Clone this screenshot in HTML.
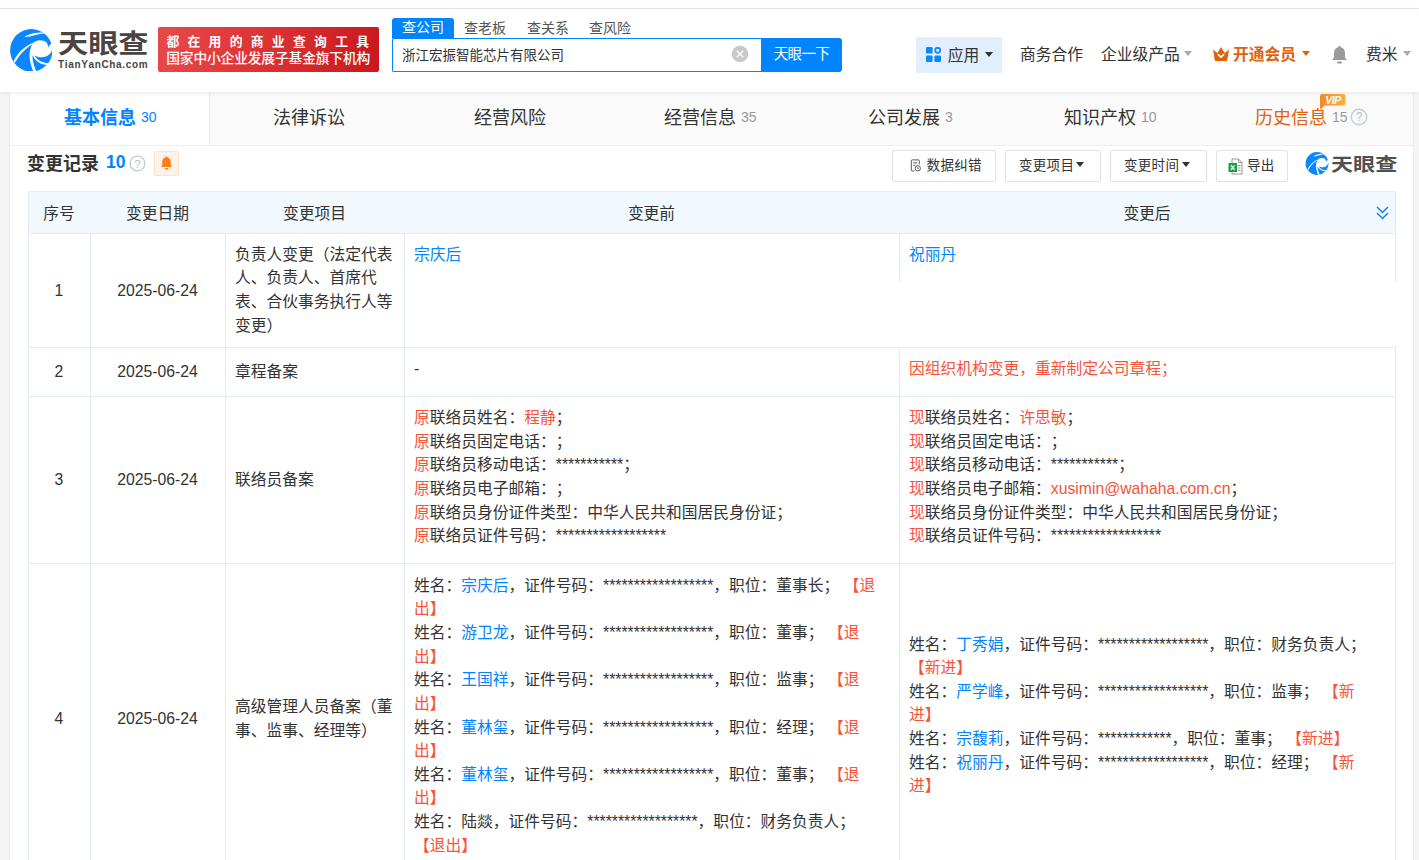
<!DOCTYPE html>
<html lang="zh-CN">
<head>
<meta charset="utf-8">
<title>天眼查 - 变更记录</title>
<style>
*{box-sizing:border-box;margin:0;padding:0}
html,body{width:1419px;height:860px;overflow:hidden}
body{text-spacing-trim:space-all;font-kerning:none;background:#f5f5f5;font-family:"Liberation Sans","Noto Sans CJK SC",sans-serif;color:#333;font-size:15.75px;line-height:23.625px;position:relative}
.abs{position:absolute;white-space:nowrap}
a{color:#0084ff;text-decoration:none}
.red{color:#f7533a}
.blue{color:#0084ff}

/* top strip + header */
#topstrip{position:absolute;left:0;top:0;width:1419px;height:9px;background:#fff;border-bottom:1px solid #e8e8e8}
#header{position:absolute;left:0;top:9px;width:1419px;height:83px;background:#fff;box-shadow:0 1px 4px rgba(0,0,0,.09);z-index:5}

/* main container */
#main{position:absolute;left:9px;top:92px;width:1405px;height:768px;background:#fff;border-left:1px solid #ededed;border-right:1px solid #ededed}
#tabs{position:absolute;left:0;top:0;width:1403px;height:54px;background:#fafafa;border-bottom:1px solid #eee}
#tabs .on{position:absolute;left:0;top:0;width:200px;height:53px;background:#fff;border-right:1px solid #eee}
.tab{position:absolute;top:13px;height:26px;line-height:26px;font-size:18px;white-space:nowrap;color:#333}
.tab small{font-size:14px;color:#999;margin-left:5px;font-weight:400;position:relative;top:-2.600px}

/* table */
#thead{position:absolute;left:28px;top:191px;width:1368px;height:43px;background:#f1f8fe;border:1px solid #e0ecf8}
.th{position:absolute;top:201.500px;height:24px;text-align:center;white-space:nowrap}
.vl{position:absolute;width:1px;background:#e3ecf6}
.hl{position:absolute;height:1px;background:#e3ecf6}
.c{position:absolute;white-space:nowrap;margin-top:0.800px}
.c.n{margin-top:0}
.btn{position:absolute;top:150px;height:32px;border:1px solid #e2e2e2;border-radius:2px;background:#fff;font-size:13.5px;line-height:30px;white-space:nowrap;color:#333}

.stab{top:9px;font-size:14px;line-height:20px;color:#555}
.nav{top:34px;font-size:15.75px;line-height:24px;color:#333}
.caret{position:absolute;width:0;height:0;border-left:4.700px solid transparent;border-right:4.700px solid transparent;border-top:5.300px solid #333}

.btxt{top:155px;font-size:13.5px;line-height:22px;color:#333;letter-spacing:0.3px}
</style>
</head>
<body>
<div id="topstrip"></div>
<div id="header">
  <!-- logo -->
  <svg class="abs" style="left:9.600px;top:19.500px" width="42.600" height="42.600" viewBox="0 0 43 43">
    <circle cx="21.500" cy="21.500" r="21.400" fill="#0a86ff"/>
    <path d="M23.600 13.800 C25.500 12.300 27.500 11.500 29.500 11.400 C31.500 11.300 33.300 11.600 34.700 12.200 C36.500 13 37.700 14.300 38 15.800 C38.300 16.800 38.400 17.800 38.300 18.900 C39 17.500 40.200 15.800 41.700 14.600 L45 14 L45 21 L42.600 20.300 C42 23.500 40 26 37 27.500 C34.500 28.600 31 28.800 28.500 28.200 C27 27.800 25.800 27.300 24.900 26.800 C26 28.800 27.500 30.500 29.500 31.800 C32 33.400 35 34.300 38.500 34.500 L38 36.600 C34.500 36.300 31.500 35.300 28.800 33.600 C26 31.800 24 29.500 22.800 26.500 C22.600 28 22.700 29.500 23 31 C23.600 34.500 24.800 38.500 26.400 42.600 L23.400 42.800 C21.800 38.500 20.500 34.500 20 30.500 C19.400 26 19.700 21.500 21.600 17.500 C21.900 16.900 22.300 16.200 22.700 15.600 C15.500 19.500 9.500 26 4.900 34.300 L3.600 32.200 C8 23.800 15 16.800 23.600 13.800 Z" fill="#fff"/>
    <path d="M14.400 8.300 C17.200 6.300 20.300 5 23.500 4.300 C26.800 3.600 30.300 3.400 33.200 3.500 L35 4.300 C32 4.500 28.800 5.200 25.800 6.100 C22.200 7.200 18 8 14.400 8.300 Z" fill="#fff"/>
  </svg>
  <div class="abs" style="left:58px;top:16.500px;font-size:26px;line-height:36px;font-weight:700;color:#4a4543;transform:scaleX(1.16);transform-origin:0 50%">天眼查</div>
  <div class="abs" style="left:58px;top:49px;font-size:10px;line-height:14px;font-weight:700;color:#4a4543;letter-spacing:0.65px">TianYanCha.com</div>
  <!-- red banner -->
  <div class="abs" style="left:158px;top:18px;width:221px;height:45px;border-radius:2px;background:linear-gradient(100deg,#e9494b 0%,#dd3436 45%,#c9181d 100%)"></div>
  <div class="abs" style="left:166.400px;top:22.500px;font-weight:700;font-size:12.800px;line-height:20px;letter-spacing:8.300px;color:#fff">都在用的商业查询工具</div>
  <div class="abs" style="left:166.200px;top:40.400px;font-weight:500;font-size:13.800px;line-height:20px;letter-spacing:-0.200px;color:#fff">国家中小企业发展子基金旗下机构</div>
  <!-- search tabs -->
  <div class="abs" style="left:392px;top:9px;width:62px;height:20px;background:#0084ff;border-radius:3px 3px 0 0;color:#fff;font-size:14px;line-height:18.500px;text-align:center">查公司</div>
  <div class="abs stab" style="left:464px">查老板</div>
  <div class="abs stab" style="left:527px">查关系</div>
  <div class="abs stab" style="left:589px">查风险</div>
  <!-- search input -->
  <div class="abs" style="left:392px;top:29px;width:371px;height:34px;border:1px solid #0084ff;border-right:none;border-radius:2px 0 0 2px;background:#fff"></div>
  <div class="abs" style="left:402px;top:36px;font-size:13.5px;line-height:22px;color:#333">浙江宏振智能芯片有限公司</div>
  <svg class="abs" style="left:731px;top:36px" width="18" height="18" viewBox="0 0 18 18"><circle cx="9" cy="9" r="8.300" fill="#c9c9c9"/><path d="M5.800 5.800 L12.200 12.200 M12.200 5.800 L5.800 12.200" stroke="#fff" stroke-width="1.300" fill="none"/></svg>
  <div class="abs" style="left:761px;top:29px;width:81px;height:34px;background:#0084ff;border-radius:0 3px 3px 0;color:#fff;font-size:14.5px;line-height:33px;text-align:center;letter-spacing:-0.6px">天眼一下</div>
  <!-- apps -->
  <div class="abs" style="left:916px;top:28px;width:86px;height:36px;background:#e0eefd;border-radius:2px"></div>
  <svg class="abs" style="left:926.400px;top:38.200px" width="16" height="16" viewBox="0 0 16 16"><rect x="0" y="0" width="6.600" height="6.600" rx="1.200" fill="#0a86ff"/><rect x="0" y="8.400" width="6.600" height="6.600" rx="1.200" fill="#0a86ff"/><rect x="8.400" y="8.400" width="6.600" height="6.600" rx="1.200" fill="#0a86ff"/><circle cx="11.700" cy="3.300" r="2.500" fill="none" stroke="#0a86ff" stroke-width="1.700"/></svg>
  <div class="abs nav" style="left:947.800px;margin-top:0.500px">应用</div>
  <div class="caret" style="left:984.700px;top:43px;border-top-color:#333"></div>
  <div class="abs nav" style="left:1020px">商务合作</div>
  <div class="abs nav" style="left:1101px">企业级产品</div>
  <div class="caret" style="left:1184px;top:41.500px;border-top-color:#aaa"></div>
  <svg class="abs" style="left:1212px;top:37px" width="18" height="16" viewBox="0 0 18 16"><path d="M1 3.500 L5.300 7 L9 1 L12.700 7 L17 3.500 L15.300 14 C15.200 14.700 14.700 15 14 15 L4 15 C3.300 15 2.800 14.700 2.700 14 Z" fill="#e0620d"/><path d="M6.300 8.600 L9 11.200 L11.700 8.600" stroke="#fff" stroke-width="1.600" fill="none" stroke-linecap="round" stroke-linejoin="round"/></svg>
  <div class="abs nav" style="left:1233px;color:#e0620d;font-weight:700">开通会员</div>
  <div class="caret" style="left:1302px;top:41.500px;border-top-color:#e0620d"></div>
  <svg class="abs" style="left:1331px;top:36px" width="17" height="20" viewBox="0 0 17 20"><path d="M8.500 1 C9.300 1 9.800 1.500 9.800 2.300 C12.600 3 14 5.300 14 8 L14 12.500 L15.800 15 L1.200 15 L3 12.500 L3 8 C3 5.300 4.400 3 7.200 2.300 C7.200 1.500 7.700 1 8.500 1 Z" fill="#9a9a9a"/><rect x="6" y="16.600" width="5" height="1.800" rx="0.900" fill="#9a9a9a"/></svg>
  <div class="abs nav" style="left:1366px">费米</div>
  <div class="caret" style="left:1403px;top:41.500px;border-top-color:#aaa"></div>
</div>
<div id="main">
  <div id="tabs"><div class="on"></div></div>
</div>

<!-- tabs text (page coords) -->
<div class="tab" style="left:64px;top:105.200px;color:#0084ff;font-weight:700">基本信息<small style="color:#0084ff">30</small></div>
<div class="tab" style="left:273px;top:105.200px">法律诉讼</div>
<div class="tab" style="left:474px;top:105.200px">经营风险</div>
<div class="tab" style="left:664px;top:105.200px">经营信息<small>35</small></div>
<div class="tab" style="left:868px;top:105.200px">公司发展<small>3</small></div>
<div class="tab" style="left:1064px;top:105.200px">知识产权<small>10</small></div>
<div class="tab" style="left:1255px;top:105.200px;color:#e0620d">历史信息<small>15</small></div>
<svg class="abs" style="left:1350.300px;top:108.200px" width="18" height="18" viewBox="0 0 18 18"><circle cx="9" cy="9" r="7.700" fill="none" stroke="#c3cad4" stroke-width="1.400"/><text x="9" y="13.200" font-size="12" text-anchor="middle" fill="#b4bbc6" font-family="Liberation Sans, sans-serif">?</text></svg>
<!-- VIP badge -->
<svg class="abs" style="left:1319px;top:93px;z-index:6" width="28" height="18" viewBox="0 0 28 18"><defs><linearGradient id="vg" x1="0" y1="0" x2="1" y2="0"><stop offset="0" stop-color="#f58a1f"/><stop offset="1" stop-color="#fbb040"/></linearGradient></defs><path d="M3 1 L24.500 1 Q26.500 1 26.500 3 L26.500 10.500 Q26.500 12.500 24.500 12.500 L6 12.500 L1 16.500 L1 3 Q1 1 3 1 Z" fill="url(#vg)"/><text x="14" y="10.600" font-size="10.500" font-weight="700" font-style="italic" text-anchor="middle" fill="#fff" font-family="Liberation Sans, sans-serif" letter-spacing="-0.5">VIP</text></svg>

<!-- section title -->
<div class="abs" style="left:27px;top:150.600px;font-size:18px;line-height:26px;font-weight:700;color:#333">变更记录</div>
<div class="abs" style="left:106px;top:149.200px;font-size:17.500px;line-height:26px;font-weight:700;color:#0084ff">10</div>
<svg class="abs" style="left:129.200px;top:154.500px" width="17" height="17" viewBox="0 0 17 17"><circle cx="8.500" cy="8.500" r="7.400" fill="none" stroke="#c3cad4" stroke-width="1.300"/><text x="8.500" y="12.500" font-size="11.500" text-anchor="middle" fill="#b4bbc6" font-family="Liberation Sans, sans-serif">?</text></svg>
<div class="abs" style="left:154px;top:151px;width:25px;height:25px;background:#fff2e8;border:1px solid #ffe1c8;border-radius:2px"></div>
<svg class="abs" style="left:160px;top:156px" width="13" height="15" viewBox="0 0 13 15"><path d="M6.500 0.500 C7.100 0.500 7.500 0.900 7.500 1.500 C9.700 2 10.800 3.800 10.800 6 L10.800 9.300 L12 11 L1 11 L2.200 9.300 L2.200 6 C2.200 3.800 3.300 2 5.500 1.500 C5.500 0.900 5.900 0.500 6.500 0.500 Z" fill="#ff7d18"/><rect x="4.800" y="12" width="3.400" height="1.500" rx="0.700" fill="#ff7d18"/></svg>

<!-- buttons -->
<div class="btn" style="left:892px;width:104px"></div>
<svg class="abs" style="left:909.500px;top:158.500px" width="11.500" height="13.300" viewBox="0 0 13 15"><path d="M10.500 6 L10.500 2 Q10.500 1 9.500 1 L2.500 1 Q1.500 1 1.500 2 L1.500 12.500 Q1.500 13.500 2.500 13.500 L5 13.500" fill="none" stroke="#555" stroke-width="1.100"/><path d="M3.800 4.300 L8.200 4.300 M3.800 7 L6 7" stroke="#555" stroke-width="1.100"/><circle cx="8.800" cy="10.500" r="3" fill="none" stroke="#555" stroke-width="1.100"/><path d="M8.800 9 L8.800 10.700 L10 10.700" stroke="#555" stroke-width="0.900" fill="none"/></svg>
<div class="abs btxt" style="left:926.600px">数据纠错</div>
<div class="btn" style="left:1005px;width:96px"></div>
<div class="abs btxt" style="left:1019px">变更项目</div>
<div class="caret" style="left:1076px;top:162px;border-top-color:#333;border-left-width:4px;border-right-width:4px;border-top-width:5.500px"></div>
<div class="btn" style="left:1110px;width:97px"></div>
<div class="abs btxt" style="left:1124px">变更时间</div>
<div class="caret" style="left:1182px;top:162px;border-top-color:#333;border-left-width:4px;border-right-width:4px;border-top-width:5.500px"></div>
<div class="btn" style="left:1216px;width:72px"></div>
<svg class="abs" style="left:1228px;top:157.600px" width="15" height="17" viewBox="0 0 15 17"><path d="M4 1 L10.500 1 L14 4.500 L14 16 L4 16 Z" fill="#fff" stroke="#8a8a8a" stroke-width="0.900"/><path d="M10.500 1 L10.500 4.500 L14 4.500" fill="none" stroke="#8a8a8a" stroke-width="0.900"/><path d="M10 7.500 L12.500 7.500 M10 10 L12.500 10 M10 12.500 L12.500 12.500" stroke="#8a8a8a" stroke-width="0.900"/><rect x="0.500" y="5" width="8.500" height="9" fill="#1e9e4a"/><path d="M3 7.300 L6.500 11.800 M6.500 7.300 L3 11.800" stroke="#fff" stroke-width="1.300"/></svg>
<div class="abs btxt" style="left:1247px">导出</div>

<!-- watermark logo -->
<svg class="abs" style="left:1305px;top:152px" width="24" height="23" viewBox="0 0 43 43">
    <circle cx="21.500" cy="21.500" r="21.400" fill="#0a86ff"/>
    <path d="M23.600 13.800 C25.500 12.300 27.500 11.500 29.500 11.400 C31.500 11.300 33.300 11.600 34.700 12.200 C36.500 13 37.700 14.300 38 15.800 C38.300 16.800 38.400 17.800 38.300 18.900 C39 17.500 40.200 15.800 41.700 14.600 L45 14 L45 21 L42.600 20.300 C42 23.500 40 26 37 27.500 C34.500 28.600 31 28.800 28.500 28.200 C27 27.800 25.800 27.300 24.900 26.800 C26 28.800 27.500 30.500 29.500 31.800 C32 33.400 35 34.300 38.500 34.500 L38 36.600 C34.500 36.300 31.500 35.300 28.800 33.600 C26 31.800 24 29.500 22.800 26.500 C22.600 28 22.700 29.500 23 31 C23.600 34.500 24.800 38.500 26.400 42.600 L23.400 42.800 C21.800 38.500 20.500 34.500 20 30.500 C19.400 26 19.700 21.500 21.600 17.500 C21.900 16.900 22.300 16.200 22.700 15.600 C15.500 19.500 9.500 26 4.900 34.300 L3.600 32.200 C8 23.800 15 16.800 23.600 13.800 Z" fill="#fff"/>
    <path d="M14.400 8.300 C17.200 6.300 20.300 5 23.500 4.300 C26.800 3.600 30.300 3.400 33.200 3.500 L35 4.300 C32 4.500 28.800 5.200 25.800 6.100 C22.200 7.200 18 8 14.400 8.300 Z" fill="#fff"/>
  </svg>
<div class="abs" style="left:1330.500px;top:149.500px;font-size:18.400px;line-height:30px;font-weight:700;color:#505050;transform:scaleX(1.2);transform-origin:0 50%">天眼查</div>

<!-- table header -->
<div id="thead"></div>
<div class="th" style="left:28px;width:62px">序号</div>
<div class="th" style="left:90px;width:135px">变更日期</div>
<div class="th" style="left:225px;width:179px">变更项目</div>
<div class="th" style="left:404px;width:495px">变更前</div>
<div class="th" style="left:899px;width:496px">变更后</div>
<svg class="abs" style="left:1375px;top:205px" width="15" height="16" viewBox="0 0 15 16"><path d="M2 2 L7.500 7.500 L13 2 M2 8 L7.500 13.500 L13 8" fill="none" stroke="#0a86ff" stroke-width="1.500" stroke-linejoin="miter"/></svg>
<!-- table body -->
<div class="vl" style="left:28px;top:234px;height:626px"></div>
<div class="vl" style="left:90px;top:234px;height:626px"></div>
<div class="vl" style="left:225px;top:234px;height:626px"></div>
<div class="vl" style="left:404px;top:234px;height:626px"></div>
<div class="vl" style="left:899px;top:234px;height:48px"></div>
<div class="vl" style="left:899px;top:347px;height:513px"></div>
<div class="vl" style="left:1395px;top:234px;height:48px"></div>
<div class="vl" style="left:1395px;top:347px;height:513px"></div>
<div class="hl" style="left:28px;top:347px;width:1368px"></div>
<div class="hl" style="left:28px;top:396px;width:1368px"></div>
<div class="hl" style="left:28px;top:563px;width:1368px"></div>
<div class="c n" style="left:28px;width:62px;text-align:center;top:278.59px">1</div>
<div class="c n" style="left:90px;width:135px;text-align:center;top:278.59px">2025-06-24</div>
<div class="c" style="left:235px;top:241.99px">负责人变更（法定代表</div>
<div class="c" style="left:235px;top:265.61px">人、负责人、首席代</div>
<div class="c" style="left:235px;top:289.24px">表、合伙事务执行人等</div>
<div class="c" style="left:235px;top:312.86px">变更）</div>
<div class="c" style="left:414px;top:241.99px"><a>宗庆后</a></div>
<div class="c" style="left:909px;top:241.99px"><a>祝丽丹</a></div>
<div class="c n" style="left:28px;width:62px;text-align:center;top:359.79px">2</div>
<div class="c n" style="left:90px;width:135px;text-align:center;top:359.79px">2025-06-24</div>
<div class="c" style="left:235px;top:358.89px">章程备案</div>
<div class="c" style="left:414px;top:356.19px">-</div>
<div class="c" style="left:909px;top:356.19px"><span class="red">因组织机构变更，重新制定公司章程；</span></div>
<div class="c n" style="left:28px;width:62px;text-align:center;top:467.69px">3</div>
<div class="c n" style="left:90px;width:135px;text-align:center;top:467.69px">2025-06-24</div>
<div class="c" style="left:235px;top:467.69px">联络员备案</div>
<div class="c" style="left:414px;top:405.39px"><span class="red">原</span>联络员姓名：<span class="red">程静</span>；</div>
<div class="c" style="left:909px;top:405.39px"><span class="red">现</span>联络员姓名：<span class="red">许思敏</span>；</div>
<div class="c" style="left:414px;top:429.01px"><span class="red">原</span>联络员固定电话：；</div>
<div class="c" style="left:909px;top:429.01px"><span class="red">现</span>联络员固定电话：；</div>
<div class="c" style="left:414px;top:452.64px"><span class="red">原</span>联络员移动电话：***********；</div>
<div class="c" style="left:909px;top:452.64px"><span class="red">现</span>联络员移动电话：***********；</div>
<div class="c" style="left:414px;top:476.26px"><span class="red">原</span>联络员电子邮箱：；</div>
<div class="c" style="left:909px;top:476.26px"><span class="red">现</span>联络员电子邮箱：<span class="red">xusimin@wahaha.com.cn</span>；</div>
<div class="c" style="left:414px;top:499.89px"><span class="red">原</span>联络员身份证件类型：中华人民共和国居民身份证；</div>
<div class="c" style="left:909px;top:499.89px"><span class="red">现</span>联络员身份证件类型：中华人民共和国居民身份证；</div>
<div class="c" style="left:414px;top:523.51px"><span class="red">原</span>联络员证件号码：******************</div>
<div class="c" style="left:909px;top:523.51px"><span class="red">现</span>联络员证件号码：******************</div>
<div class="c n" style="left:28px;width:62px;text-align:center;top:707.30px">4</div>
<div class="c n" style="left:90px;width:135px;text-align:center;top:707.30px">2025-06-24</div>
<div class="c" style="left:235px;top:694.38px">高级管理人员备案（董</div>
<div class="c" style="left:235px;top:718.00px">事、监事、经理等）</div>
<div class="c" style="left:414px;top:572.99px">姓名：<a>宗庆后</a>，证件号码：******************，职位：董事长； <span class="red">【退</span></div>
<div class="c" style="left:414px;top:596.61px"><span class="red">出】</span></div>
<div class="c" style="left:414px;top:620.24px">姓名：<a>游卫龙</a>，证件号码：******************，职位：董事； <span class="red">【退</span></div>
<div class="c" style="left:414px;top:643.86px"><span class="red">出】</span></div>
<div class="c" style="left:414px;top:667.49px">姓名：<a>王国祥</a>，证件号码：******************，职位：监事； <span class="red">【退</span></div>
<div class="c" style="left:414px;top:691.11px"><span class="red">出】</span></div>
<div class="c" style="left:414px;top:714.74px">姓名：<a>董林玺</a>，证件号码：******************，职位：经理； <span class="red">【退</span></div>
<div class="c" style="left:414px;top:738.36px"><span class="red">出】</span></div>
<div class="c" style="left:414px;top:761.99px">姓名：<a>董林玺</a>，证件号码：******************，职位：董事； <span class="red">【退</span></div>
<div class="c" style="left:414px;top:785.61px"><span class="red">出】</span></div>
<div class="c" style="left:414px;top:809.24px">姓名：陆燚，证件号码：******************，职位：财务负责人；</div>
<div class="c" style="left:414px;top:832.86px"><span class="red">【退出】</span></div>
<div class="c" style="left:909px;top:631.79px">姓名：<a>丁秀娟</a>，证件号码：******************，职位：财务负责人；</div>
<div class="c" style="left:909px;top:655.41px"><span class="red">【新进】</span></div>
<div class="c" style="left:909px;top:679.04px">姓名：<a>严学峰</a>，证件号码：******************，职位：监事； <span class="red">【新</span></div>
<div class="c" style="left:909px;top:702.66px"><span class="red">进】</span></div>
<div class="c" style="left:909px;top:726.29px">姓名：<a>宗馥莉</a>，证件号码：************，职位：董事； <span class="red">【新进】</span></div>
<div class="c" style="left:909px;top:749.91px">姓名：<a>祝丽丹</a>，证件号码：******************，职位：经理； <span class="red">【新</span></div>
<div class="c" style="left:909px;top:773.54px"><span class="red">进】</span></div>

</body>
</html>
